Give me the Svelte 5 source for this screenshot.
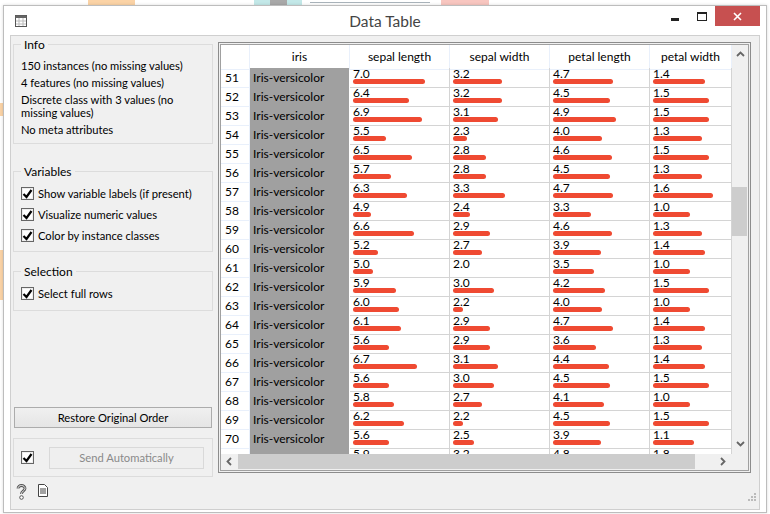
<script>
	// iris rows 51..71, scrolled view
	const rows = [
		[51, 7.0, 3.2, 4.7, 1.4], [52, 6.4, 3.2, 4.5, 1.5], [53, 6.9, 3.1, 4.9, 1.5],
		[54, 5.5, 2.3, 4.0, 1.3], [55, 6.5, 2.8, 4.6, 1.5], [56, 5.7, 2.8, 4.5, 1.3],
		[57, 6.3, 3.3, 4.7, 1.6], [58, 4.9, 2.4, 3.3, 1.0], [59, 6.6, 2.9, 4.6, 1.3],
		[60, 5.2, 2.7, 3.9, 1.4], [61, 5.0, 2.0, 3.5, 1.0], [62, 5.9, 3.0, 4.2, 1.5],
		[63, 6.0, 2.2, 4.0, 1.0], [64, 6.1, 2.9, 4.7, 1.4], [65, 5.6, 2.9, 3.6, 1.3],
		[66, 6.7, 3.1, 4.4, 1.4], [67, 5.6, 3.0, 4.5, 1.5], [68, 5.8, 2.7, 4.1, 1.0],
		[69, 6.2, 2.2, 4.5, 1.5], [70, 5.6, 2.5, 3.9, 1.1], [71, 5.9, 3.2, 4.8, 1.8]
	];
	const ranges = [[4.3, 7.9], [2.0, 4.4], [1.0, 6.9], [0.1, 2.5]];
	const headers = ['sepal length', 'sepal width', 'petal length', 'petal width'];

	function barWidth(v, i) {
		const [lo, hi] = ranges[i];
		if (v === lo) return 0;
		return Math.round(2 + (93 * (v - lo)) / (hi - lo));
	}
</script>

{#snippet tick()}
	<span class="check"><svg width="11" height="10" viewBox="0 0 11 10"><path d="M1.5 5l3 3 5-7" fill="none" stroke="#000" stroke-width="2.2" /></svg></span>
{/snippet}

<div class="desktop">
	<div class="backdrop">
		<span class="bit orange1"></span>
		<span class="bit teal1"></span>
		<span class="bit grey1"></span>
		<span class="bit pink1"></span>
		<span class="bit line1"></span>
		<span class="bit side1"></span>
		<span class="bit side2"></span>
	</div>

	<div class="window">
		<div class="titlebar">
			<svg class="appicon" width="12" height="12" viewBox="0 0 12 12">
				<rect x="0.5" y="0.5" width="11" height="11" fill="#fff" stroke="#555" />
				<rect x="0.5" y="0.5" width="11" height="2.5" fill="#666" />
				<path d="M4 3v8M8 3v8M1 6h10M1 9h10" stroke="#bbb" fill="none" />
			</svg>
			<div class="title">Data Table</div>
			<div class="winbtns">
				<span class="minimize"></span>
				<span class="maximize"></span>
				<span class="close">
					<svg width="9" height="9" viewBox="0 0 9 9">
						<path d="M1 1l7 7M8 1l-7 7" stroke="#fff" stroke-width="1.6" />
					</svg>
				</span>
			</div>
		</div>

		<div class="client">
			<div class="main">
				<aside class="controls">
					<fieldset class="info">
						<legend>Info</legend>
						<p>150 instances (no missing values)</p>
						<p>4 features (no missing values)</p>
						<p>Discrete class with 3 values (no missing values)</p>
						<p>No meta attributes</p>
					</fieldset>

					<fieldset class="vars">
						<legend>Variables</legend>
						<label>{@render tick()}Show variable labels (if present)</label>
						<label>{@render tick()}Visualize numeric values</label>
						<label>{@render tick()}Color by instance classes</label>
					</fieldset>

					<fieldset class="sel">
						<legend>Selection</legend>
						<label>{@render tick()}Select full rows</label>
					</fieldset>

					<div class="spacer"></div>

					<button class="restore">Restore Original Order</button>

					<div class="autosend">
						{@render tick()}
						<button class="send" disabled>Send Automatically</button>
					</div>
				</aside>

				<div class="frame">
					<div class="view">
						<div class="tablearea">
							<div class="table">
								<div class="row head">
									<div class="corner"></div>
									<div class="hcell">iris</div>
									{#each headers as h}
										<div class="hcell">{h}</div>
									{/each}
								</div>
								{#each rows as r}
									<div class="row">
										<div class="rownum">{r[0] < 71 ? r[0] : ''}</div>
										<div class="klass">{r[0] < 71 ? 'Iris-versicolor' : ''}</div>
										{#each r.slice(1) as v, i}
											<div class="num">
												<span class="val">{v.toFixed(1)}</span>
												<span class="bar" style="width: {barWidth(v, i)}px"></span>
											</div>
										{/each}
									</div>
								{/each}
							</div>
							<div class="vscroll">
								<svg width="9" height="6" viewBox="0 0 9 6"><path d="M1 5l3.5-3.5L8 5" fill="none" stroke="#666" stroke-width="1.8" /></svg>
								<div class="vtrack"><div class="vthumb"></div></div>
								<svg width="9" height="6" viewBox="0 0 9 6"><path d="M1 1l3.5 3.5L8 1" fill="none" stroke="#666" stroke-width="1.8" /></svg>
							</div>
						</div>
						<div class="hscroll">
							<svg width="6" height="9" viewBox="0 0 6 9"><path d="M5 1L1.5 4.5 5 8" fill="none" stroke="#666" stroke-width="1.8" /></svg>
							<div class="hthumb"></div>
							<svg width="6" height="9" viewBox="0 0 6 9"><path d="M1 1l3.5 3.5L1 8" fill="none" stroke="#666" stroke-width="1.8" /></svg>
						</div>
					</div>
				</div>
			</div>

			<div class="statusbar">
				<svg class="help" width="11" height="16" viewBox="0 0 11 16">
					<path d="M2 4.5C2 2.5 3.5 1.5 5.5 1.5S9 2.8 9 4.5C9 6.8 5.5 7 5.5 10" fill="none" stroke="#555" stroke-width="2.8" />
					<path d="M2 4.5C2 2.5 3.5 1.5 5.5 1.5S9 2.8 9 4.5C9 6.8 5.5 7 5.5 10" fill="none" stroke="#f4f4f4" stroke-width="0.9" />
					<circle cx="5.5" cy="13.5" r="1.8" fill="#fff" stroke="#555" />
				</svg>
				<svg class="doc" width="10" height="13" viewBox="0 0 10 13">
					<path d="M0.5 0.5h6l3 3v9h-9z" fill="#fff" stroke="#444" />
					<path d="M2 5h6M2 7h6M2 9h6" stroke="#444" />
				</svg>
				<svg class="grip" width="8" height="8" viewBox="0 0 8 8" fill="#bbb">
					<rect x="6" y="0" width="2" height="2" />
					<rect x="3" y="3" width="2" height="2" /><rect x="6" y="3" width="2" height="2" />
					<rect x="0" y="6" width="2" height="2" /><rect x="3" y="6" width="2" height="2" /><rect x="6" y="6" width="2" height="2" />
				</svg>
			</div>
		</div>
	</div>
</div>

<style>
	:global(body) {
		margin: 0;
		background: #fff;
	}

	.desktop {
		position: relative;
		width: 770px;
		height: 514px;
		overflow: hidden;
		padding: 5px 3px 1px 3px;
		box-sizing: border-box;
		font-family: Lato, "Open Sans", sans-serif;
		font-size: 12px;
		color: #000;
	}

	.backdrop {
		position: absolute;
		inset: 0;
	}
	.bit {
		position: absolute;
		display: block;
	}
	.orange1 { left: 88px; top: 0; width: 47px; height: 5px; background: #fbd3a6; }
	.teal1 { left: 254px; top: 0; width: 48px; height: 5px; background: #c3e8e8; }
	.grey1 { left: 270px; top: 0; width: 17px; height: 5px; background: #a9a9a9; }
	.pink1 { left: 441px; top: 0; width: 48px; height: 5px; background: #f8c6c0; }
	.line1 { left: 310px; top: 2px; width: 120px; height: 1px; background: #aab4bb; }
	.side1 { left: 0; top: 103px; width: 3px; height: 13px; background: #fbd3a6; }
	.side2 { left: 0; top: 250px; width: 3px; height: 50px; background: #fbd3a6; }

	.window {
		position: relative;
		height: 100%;
		box-sizing: border-box;
		background: #fff;
		border: 1px solid #bdbdbd;
		display: flex;
		flex-direction: column;
		padding: 0 6px 2px 6px;
		box-shadow: 0 0 3px rgba(0, 0, 0, 0.15);
	}

	.titlebar {
		height: 29px;
		flex: none;
		display: flex;
		align-items: center;
		position: relative;
	}
	.appicon {
		margin-left: 5px;
	}
	.title {
		position: absolute;
		left: 0;
		right: 0;
		top: 5px;
		text-align: center;
		font-size: 15.5px;
		line-height: 20px;
		color: #444;
	}
	.winbtns {
		margin-left: auto;
		display: flex;
		align-items: flex-start;
		align-self: flex-start;
	}
	.minimize {
		width: 8px;
		height: 3px;
		background: #222;
		margin-top: 12px;
		margin-right: 18px;
	}
	.maximize {
		width: 8px;
		height: 6px;
		border: 1px solid #222;
		border-top-width: 2px;
		margin-top: 6px;
		margin-right: 8px;
	}
	.close {
		width: 45px;
		height: 20px;
		background: #c75050;
		display: flex;
		align-items: center;
		justify-content: center;
	}

	.client {
		flex: 1;
		min-height: 0;
		background: #f0f0f0;
		border: 1px solid #cfcfcf;
		display: flex;
		flex-direction: column;
	}
	.main {
		flex: 1;
		min-height: 0;
		display: flex;
		padding: 1px 8px 0 2px;
	}

	.controls {
		width: 200px;
		flex: none;
		display: flex;
		flex-direction: column;
		margin-right: 5px;
		margin-bottom: 1px;
		font-size: 11.2px;
	}

	fieldset {
		margin: 0;
		padding: 0 0 0 7px;
		border: 1px solid #dcdcdc;
		min-width: 0;
		box-sizing: border-box;
	}
	legend {
		padding: 0 3px;
		line-height: 15px;
		font-size: 12px;
	}
	.info {
		height: 107px;
		padding-top: 7px;
	}
	.info p {
		margin: 0 0 4px;
		line-height: 13px;
		width: 180px;
	}
	.vars {
		margin-top: 20px;
		height: 88px;
		padding-top: 4px;
	}
	.sel {
		margin-top: 12px;
		height: 47px;
		padding-top: 4px;
	}
	label {
		display: flex;
		align-items: center;
		height: 21px;
	}
	.check {
		width: 11px;
		height: 11px;
		border: 1px solid #666;
		background: #fff;
		flex: none;
		margin-right: 4px;
		display: flex;
		align-items: center;
		justify-content: center;
		box-shadow: inset 0 0 0 1px #eee;
	}
	.spacer {
		flex: 1;
	}
	.restore {
		height: 21px;
		margin: 0 1px 10px 1px;
		border: 1px solid #acacac;
		background: linear-gradient(#f0f0f0, #e5e5e5);
		font: inherit;
		color: #000;
		padding: 0;
	}
	.autosend {
		height: 39px;
		border: 1px solid #dcdcdc;
		display: flex;
		align-items: center;
		padding-left: 7px;
		box-sizing: border-box;
		flex: none;
	}
	.autosend .check {
		margin-right: 15px;
	}
	.send {
		width: 155px;
		height: 22px;
		border: 1px solid #d9d9d9;
		background: #efefef;
		color: #8a8a8a;
		font: inherit;
		padding: 0;
	}

	.frame {
		flex: 1;
		min-width: 0;
		border: 1px solid #8c8c8c;
		padding: 1px;
		margin: 5px 0 5px 0;
		background: #f0f0f0;
	}
	.view {
		height: 100%;
		border: 1px solid #a0a0a0;
		box-sizing: border-box;
		display: flex;
		flex-direction: column;
	}
	.tablearea {
		flex: 1;
		min-height: 0;
		display: flex;
	}
	.table {
		width: 511px;
		flex: none;
		overflow: hidden;
		background: #fff;
	}
	.row {
		display: grid;
		grid-template-columns: 29px 100px 100px 100px 100px 82px;
		height: 19px;
	}
	.head {
		height: 23px;
	}
	.corner,
	.hcell {
		border-right: 1px solid #e9f0fb;
		border-bottom: 1px solid #e9f0fb;
		box-sizing: border-box;
	}
	.hcell {
		text-align: center;
		line-height: 24px;
		white-space: nowrap;
	}
	.rownum {
		padding-left: 4px;
		line-height: 19px;
		border-right: 1px solid #e9f0fb;
		border-bottom: 1px solid #e9f0fb;
		box-sizing: border-box;
	}
	.klass {
		background: #a0a0a0;
		padding-left: 3px;
		line-height: 19px;
		margin-right: 1px;
		border-bottom: 1px solid #d4d4d4;
		box-sizing: border-box;
	}
	.num {
		border-right: 1px solid #d4d4d4;
		border-bottom: 1px solid #d4d4d4;
		box-sizing: border-box;
		padding-left: 3px;
	}
	.val {
		display: block;
		height: 11px;
		line-height: 11px;
	}
	.bar {
		display: block;
		height: 5px;
		border-radius: 3px;
		background: #ef4a32;
	}

	.vscroll {
		flex: 1;
		display: flex;
		flex-direction: column;
		align-items: center;
		padding: 6px 0 7px;
		background: #f0f0f0;
	}
	.vtrack {
		flex: 1;
		width: 100%;
		padding-top: 130px;
		box-sizing: border-box;
	}
	.vthumb {
		height: 49px;
		background: #cdcdcd;
		margin-right: 1px;
	}
	.hscroll {
		height: 16px;
		flex: none;
		display: flex;
		align-items: flex-start;
		background: #f0f0f0;
		padding-left: 5px;
	}
	.hscroll svg {
		margin-top: 3px;
	}
	.hthumb {
		width: 457px;
		height: 15px;
		background: #cdcdcd;
		margin-left: 6px;
	}
	.hscroll svg:last-child {
		margin-left: 25px;
	}

	.statusbar {
		height: 31px;
		flex: none;
		display: flex;
		align-items: flex-start;
		padding: 6px 3px 0 5px;
		box-sizing: border-box;
	}
	.doc {
		margin-left: 11px;
	}
	.grip {
		margin: 9px 0 0 auto;
	}
</style>
